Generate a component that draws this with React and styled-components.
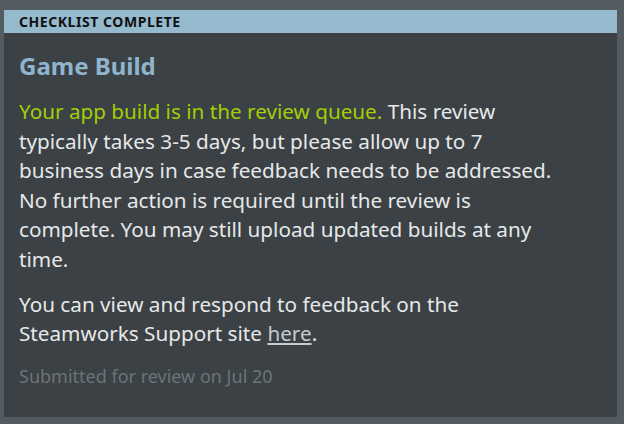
import React from "react";
import styled, { createGlobalStyle } from "styled-components";

const GlobalStyle = createGlobalStyle`
  html, body {
    margin: 0;
    padding: 0;
    background: #545b61;
    font-family: "Noto Sans", "Open Sans", sans-serif;
  }
`;

const Page = styled.div`
  width: 624px;
  height: 424px;
  padding: 10px 7px 7px 4px;
  box-sizing: border-box;
`;

const Card = styled.div`
  background: #3b4144;
  height: 100%;
  display: flex;
  flex-direction: column;
`;

const Banner = styled.div`
  background: #95b9cd;
  color: #111;
  font-size: 14px;
  font-weight: 700;
  height: 23px;
  line-height: 23px;
  padding-left: 15px;
  letter-spacing: 0.55px;
`;

const Body = styled.div`
  padding: 16px 0 0 15px;
  max-width: 550px;
`;

const Title = styled.h2`
  margin: 0 0 15px;
  font-size: 24px;
  font-weight: 700;
  color: #8eb5cd;
`;

const Para = styled.p`
  margin: 0 0 15px;
  font-size: 20.7px;
  line-height: 29.6px;
  color: #e6e8e9;
`;

const Green = styled.span`
  color: #a3cf06;
`;

const Link = styled.a`
  color: #c7ccd0;
  text-decoration: underline;
`;

const Meta = styled.div`
  margin-top: 4px;
  font-size: 18px;
  color: #6c7479;
`;

export default function App() {
  return (
    <Page>
      <GlobalStyle />
      <Card>
        <Banner>CHECKLIST COMPLETE</Banner>
        <Body>
          <Title>Game Build</Title>
          <Para>
            <Green>Your app build is in the review queue.</Green> This review
            typically takes 3-5 days, but please allow up to 7 business days in
            case feedback needs to be addressed. No further action is required
            until the review is complete. You may still upload updated builds at
            any time.
          </Para>
          <Para>
            You can view and respond to feedback on the Steamworks Support site{" "}
            <Link href="#">here</Link>.
          </Para>
          <Meta>Submitted for review on Jul 20</Meta>
        </Body>
      </Card>
    </Page>
  );
}
